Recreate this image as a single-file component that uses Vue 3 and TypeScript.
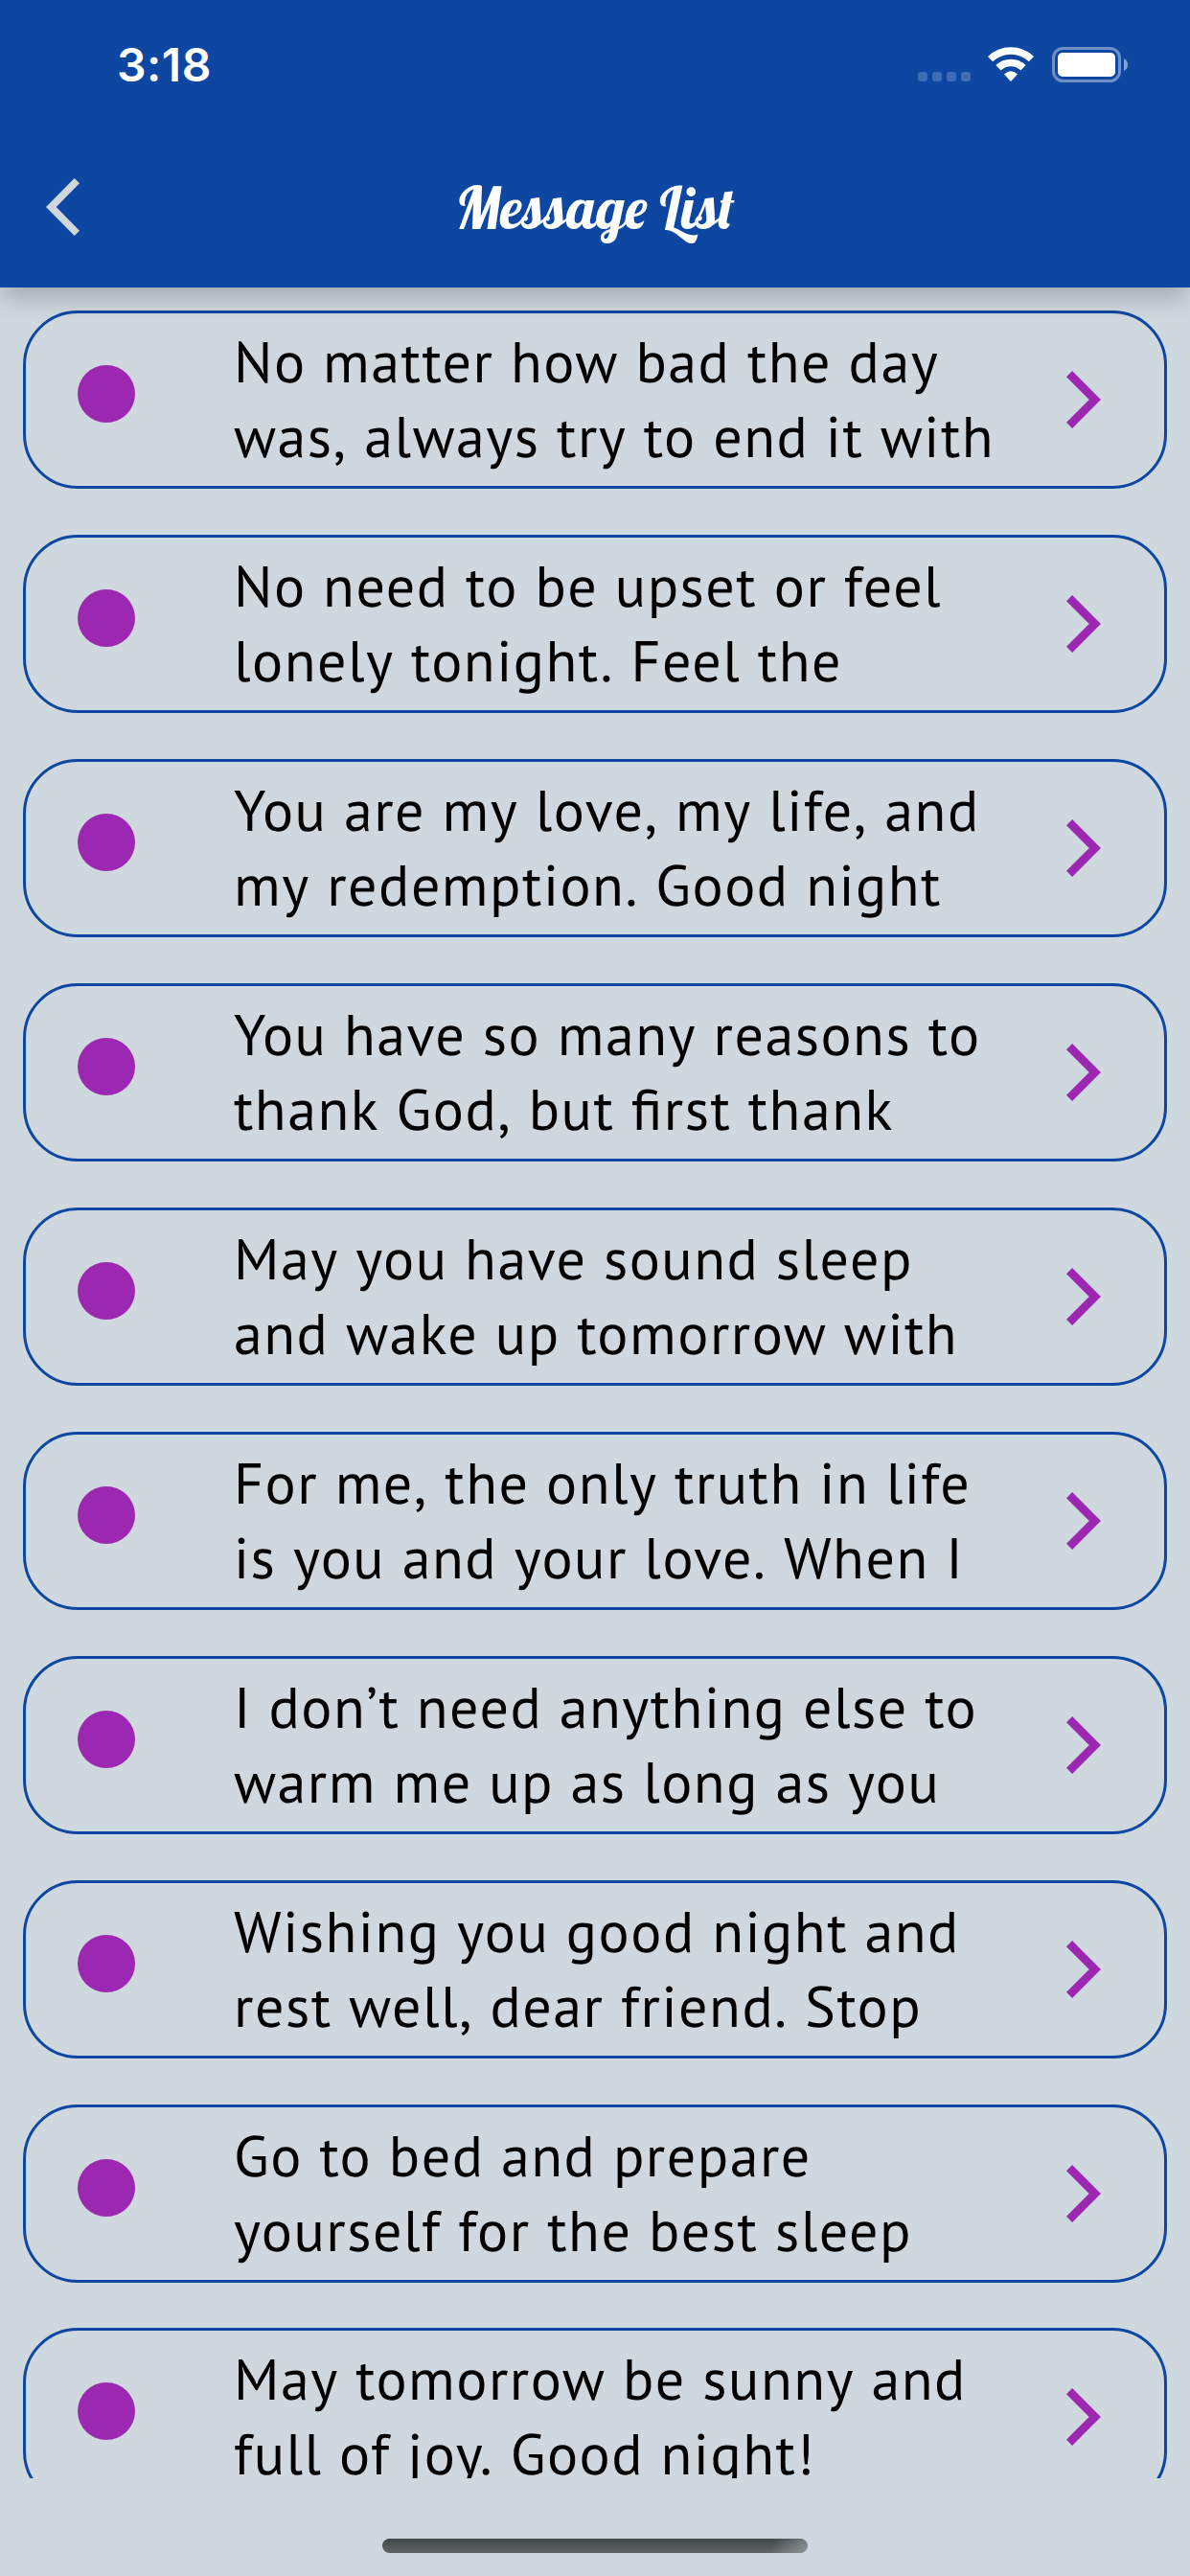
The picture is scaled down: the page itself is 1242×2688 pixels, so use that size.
<script setup lang="ts">
const messages: string[][][] = [
  ['No matter how bad the day', 'was, always try to end it with'],
  ['No need to be upset or feel', 'lonely tonight. Feel the'],
  ['You are my love, my life, and', 'my redemption. Good night'],
  ['You have so many reasons to', 'thank God, but first thank'],
  ['May you have sound sleep', 'and wake up tomorrow with'],
  ['For me, the only truth in life', 'is you and your love. When I'],
  ['I don’t need anything else to', 'warm me up as long as you'],
  ['Wishing you good night and', 'rest well, dear friend. Stop'],
  ['Go to bed and prepare', 'yourself for the best sleep'],
  ['May tomorrow be sunny and', 'full of joy. Good night!'],
].map((lines) => lines.map((line) => line.split(' ')))
</script>

<template>
  <div class="screen">
    <header class="header">
      <div class="status">
        <span class="time">3:18</span>
        <div class="indicators">
          <div class="signal"><i v-for="n in 4" :key="n"></i></div>
          <svg class="wifi" width="48" height="37" viewBox="0 0 48 37">
            <g fill="none" stroke="#fff" stroke-width="7.5">
              <path d="M2.6 12.6a30.8 30.8 0 0 1 42.800 0" />
              <path d="M11 21.8a18.600 18.600 0 0 1 26 0" />
            </g>
            <path d="M24 36l-7-7.400q7-6.800 14 0z" fill="#fff" />
          </svg>
          <svg class="battery" width="80" height="37" viewBox="0 0 80 37">
            <rect x="1.500" y="1.500" width="69" height="34" rx="10" fill="none" stroke="#6e91c7" stroke-width="3" />
            <rect x="6" y="6" width="60" height="25" rx="5" fill="#fff" />
            <path d="M75 12q4 2 4 6.500t-4 6.500z" fill="#86a3d0" />
          </svg>
        </div>
      </div>
      <div class="toolbar">
        <svg class="back" width="35" height="60" viewBox="0 0 35 60">
          <path d="M32.300 2.700L5.300 30l27 27.300" fill="none" stroke="#cfd8dc" stroke-width="7.500" />
        </svg>
        <h1 class="title">Message List</h1>
      </div>
    </header>

    <main class="list">
      <article v-for="(lines, i) in messages" :key="i" class="card">
        <span class="dot"></span>
        <div class="body">
          <!-- Words are separate boxes so punctuation is not kerned against the following space. -->
          <p v-for="(words, j) in lines" :key="j" class="line">
            <template v-for="(word, k) in words" :key="k"><span class="word">{{ word }}</span>{{ ' ' }}</template>
          </p>
        </div>
        <svg class="chevron" width="36" height="60" viewBox="0 0 36 60">
          <path d="M3 3.200L29.800 30L3 56.800" fill="none" stroke="#9c27b0" stroke-width="8.700" />
        </svg>
      </article>
    </main>
    <footer class="footer"><div class="home"></div></footer>
  </div>
</template>

<style>
body { margin: 0; background: #cfd8de; }
</style>
<style scoped>
.screen { display: flex; flex-direction: column; width: 1242px; height: 2688px; overflow: hidden; background: #cfd8de; }
.header {
  position: relative; z-index: 1; flex: none; height: 300px; box-sizing: border-box; background: #0d47a1;
  box-shadow: 0 12px 24px -2px rgba(0,0,0,.22);
}
.status { display: flex; justify-content: space-between; height: 132px; padding: 0 64px 0 122px; }
.time { margin-top: 37px; font: 600 48px/62px Inter, sans-serif; color: #fff; letter-spacing: .5px; }
.indicators { display: flex; padding-top: 49px; height: 37px; }
.signal { display: flex; gap: 5px; padding-top: 26px; margin-right: 18px; }
.signal i { width: 10px; height: 10px; border-radius: 3px; background: #3e6cb5; }
.wifi { margin-right: 19px; }
.toolbar { display: flex; align-items: flex-start; height: 168px; }
.back { flex: none; margin: 54px 0 0 48px; }
.title { flex: 1; margin: 47px 83px 0 0; text-align: center; font: 400 60px/75px "Lobster", "Liberation Serif", serif; color: #fff; }
.list { flex: none; height: 2286px; box-sizing: border-box; padding: 24px 24px 0; overflow: hidden; display: flex; flex-direction: column; gap: 47.940px; }
.card { flex: none; display: flex; height: 186px; box-sizing: border-box; border: 3px solid #0d47a1; border-radius: 57px; }
.dot { flex: none; width: 60px; height: 60px; margin: 54px 103px 0 54px; border-radius: 50%; background: #9c27b0; }
.body { flex: none; width: 828px; padding-top: 11px; }
.line { margin: 0; height: 78px; white-space: nowrap; font: 400 60px/78px "PT Sans", "Open Sans", sans-serif; letter-spacing: 1.5px; font-feature-settings: "liga" 1; text-rendering: geometricPrecision; color: #000; }
.word { display: inline-block; }
.chevron { flex: none; margin: 60px 0 0 41px; }
.footer { display: flex; justify-content: center; padding-top: 63px; }
.home { width: 444px; height: 15px; border-radius: 8px; background: linear-gradient(110deg, transparent 91%, rgba(190,200,205,.5)), linear-gradient(#424748, #616465); }
</style>
